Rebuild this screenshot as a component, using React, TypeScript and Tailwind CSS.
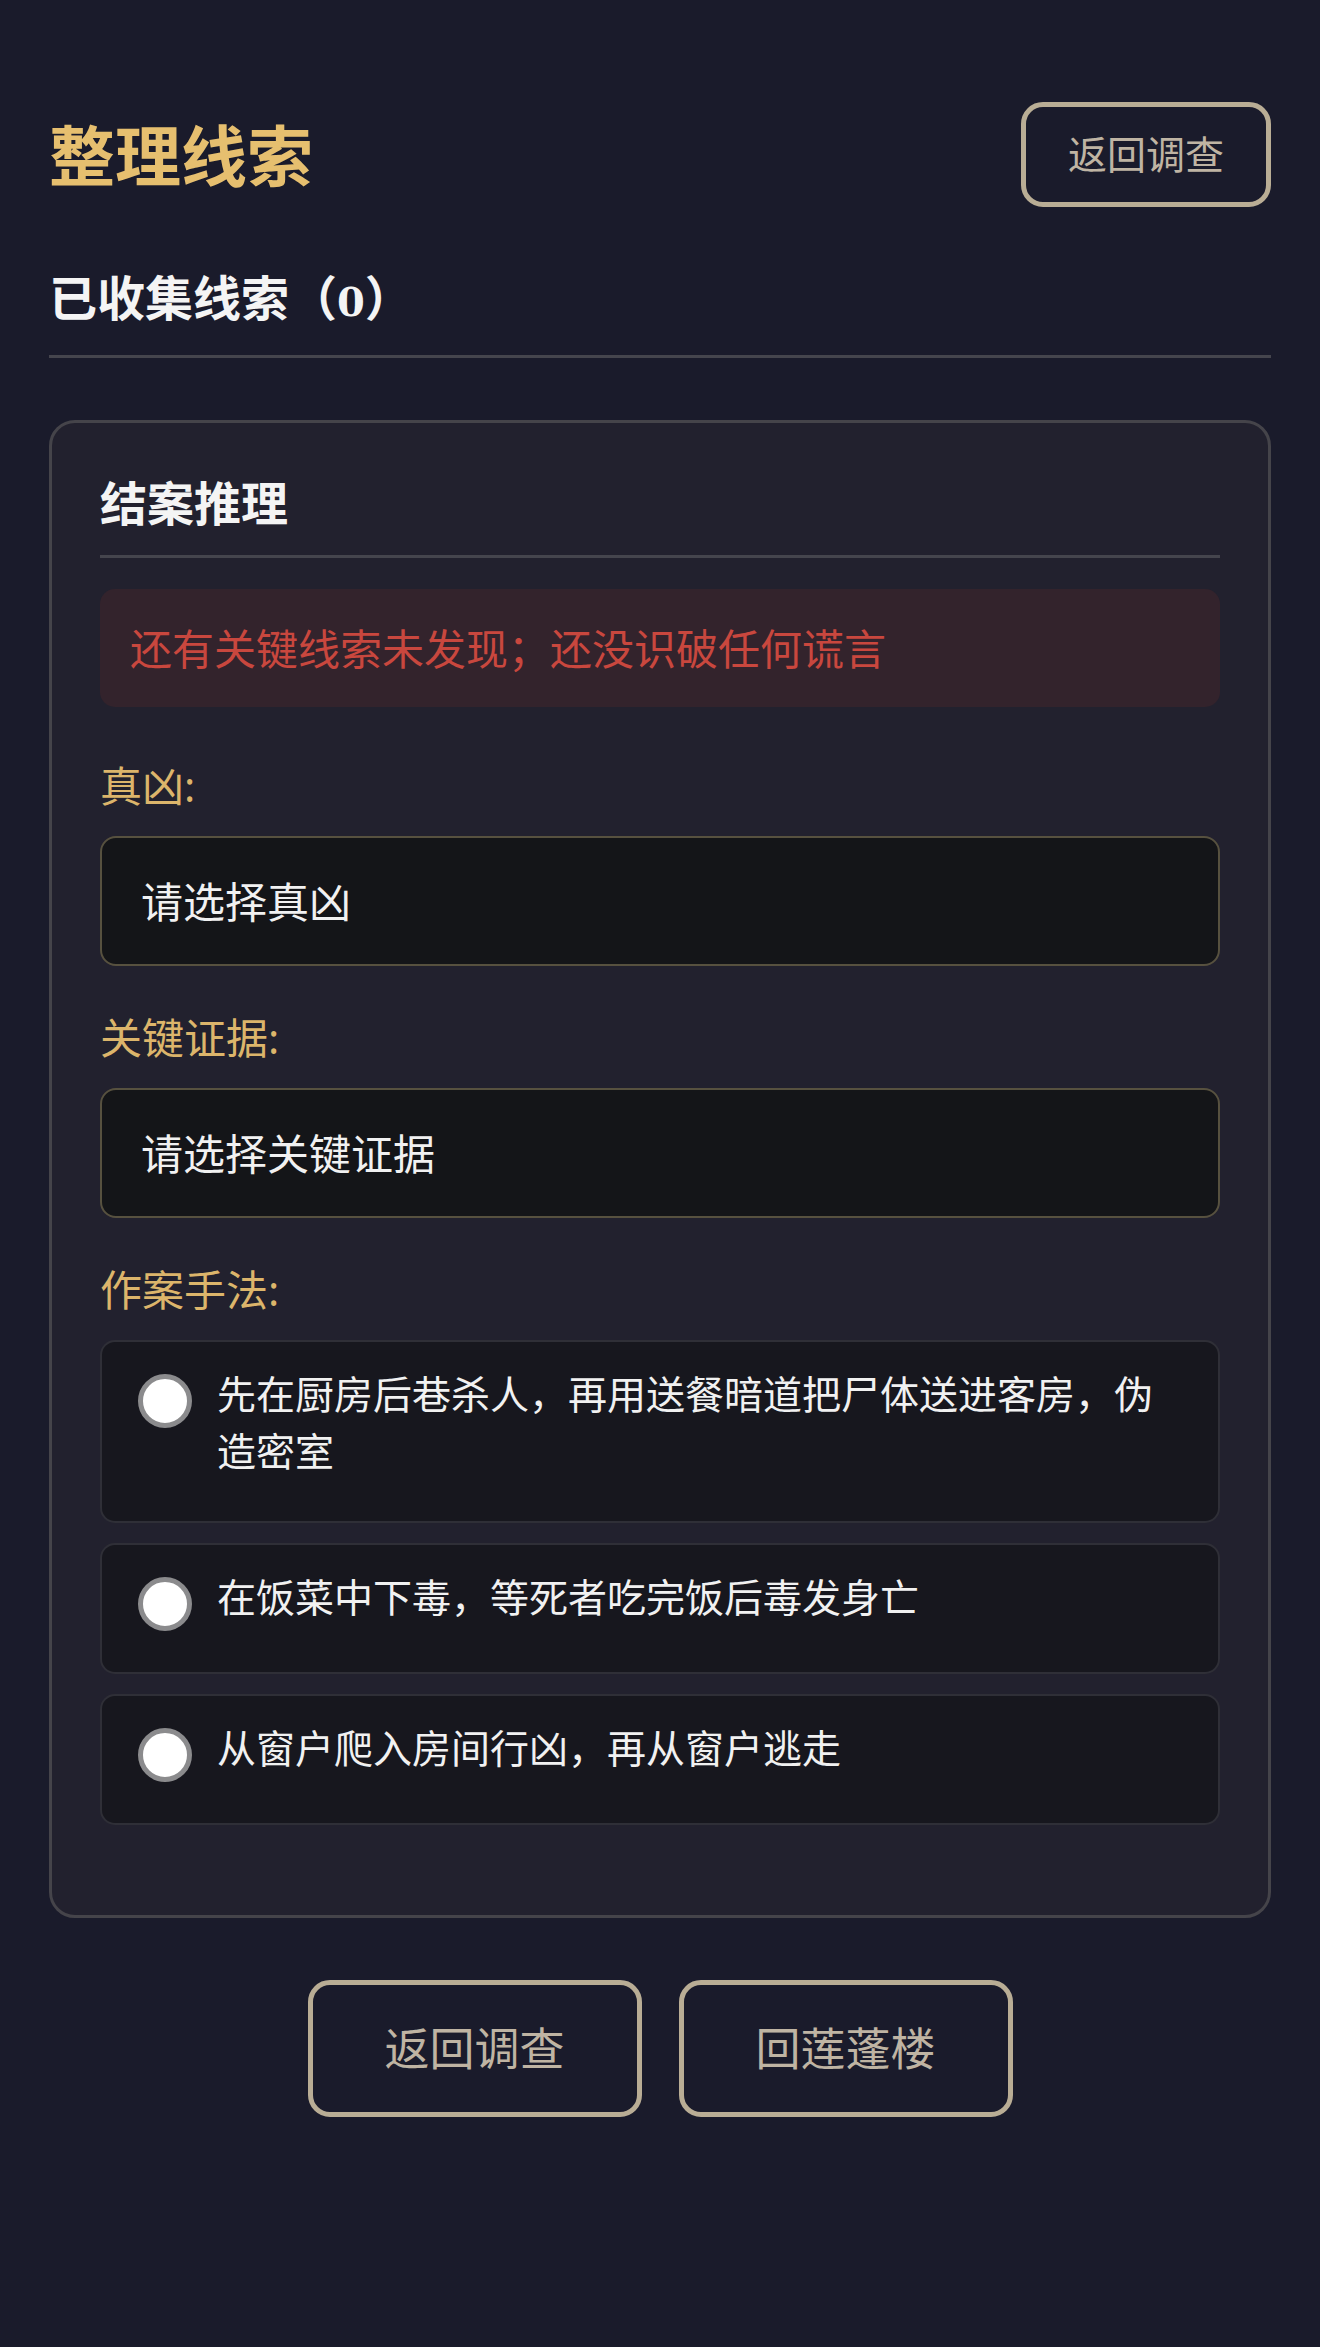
import { FC } from 'react'

const methods = [
  '先在厨房后巷杀人，再用送餐暗道把尸体送进客房，伪造密室',
  '在饭菜中下毒，等死者吃完饭后毒发身亡',
  '从窗户爬入房间行凶，再从窗户逃走',
]

const font = "font-['Noto_Sans','Noto_Sans_CJK_SC',sans-serif]"

const OutlineButton: FC<{ label: string; className: string }> = ({ label, className }) => (
  <button
    className={`flex items-center justify-center rounded-[22px] border-[5px] border-[#b9ad95] bg-transparent text-[#bfb4a3] ${className}`}>
    {label}
  </button>
)

const Field: FC<{ label: string; placeholder: string; className: string }> = ({
  label,
  placeholder,
  className,
}) => (
  <div className={className}>
    <div className="text-[42px] leading-[58px] text-[#dcb56b]">{label}:</div>
    <div className="mt-[21px] flex h-[130px] items-center rounded-[16px] border-2 border-[#57513f] bg-[#141518] px-[39px] text-[42px] text-[#f1f1f1]">
      {placeholder}
    </div>
  </div>
)

export default function App() {
  return (
    <div className={`min-h-[2347px] bg-[#1a1b2b] px-[49px] pt-[102px] ${font}`}>
      <header className="flex items-center justify-between">
        <h1 className="text-[66px] font-bold leading-[80px] text-[#e6bf6f]">整理线索</h1>
        <OutlineButton label="返回调查" className="h-[105px] w-[250px] text-[39px]" />
      </header>

      <h2 className="mt-[55px] border-b-[3px] border-[#45454d] pb-[17px] text-[48px] font-bold leading-[72px] text-[#f4f4f4]">
        已收集线索（<span className="font-['DejaVu_Serif',serif] text-[40px]">0</span>）
      </h2>

      <section className="mt-[62px] rounded-[26px] border-[3px] border-[#45444a] bg-[#22212e] px-[48px] pb-[90px] pt-[48px]">
        <h3 className="border-b-[3px] border-[#45454d] pb-[20px] text-[47px] font-bold leading-[64px] text-[#f4f4f4]">
          结案推理
        </h3>

        <div className="mt-[31px] flex h-[118px] items-center rounded-[15px] bg-[#33232c] px-[30px] text-[42px] text-[#c9473e]">
          还有关键线索未发现；还没识破任何谎言
        </div>

        <Field label="真凶" placeholder="请选择真凶" className="mt-[50px]" />
        <Field label="关键证据" placeholder="请选择关键证据" className="mt-[43px]" />

        <div className="mt-[43px] text-[42px] leading-[58px] text-[#dcb56b]">作案手法:</div>
        <div className="mt-[21px] flex flex-col gap-[20px]">
          {methods.map(method => (
            <label
              key={method}
              className="flex items-start rounded-[15px] border-2 border-[#2f2f37] bg-[#17171e] pb-[41px] pl-[36px] pr-[36px] pt-[23px]">
              <span className="mt-[9px] h-[54px] w-[54px] shrink-0 rounded-full border-[5px] border-[#8b8b8d] bg-white" />
              <span className="ml-[25px] pb-[1px] text-[39px] leading-[57px] text-[#f1f1f1]">{method}</span>
            </label>
          ))}
        </div>
      </section>

      <div className="mt-[62px] flex justify-center gap-[37px]">
        <OutlineButton label="返回调查" className="h-[137px] w-[334px] text-[45px]" />
        <OutlineButton label="回莲蓬楼" className="h-[137px] w-[334px] text-[45px]" />
      </div>
    </div>
  )
}
